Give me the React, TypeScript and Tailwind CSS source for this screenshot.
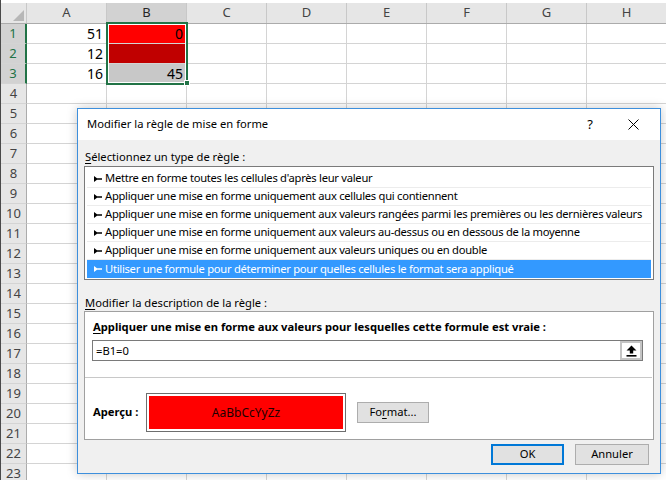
import type { ReactNode } from "react";

const columns = ["A", "B", "C", "D", "E", "F", "G", "H"];

type Cell = { value?: string; bg?: string };

const data: Record<number, Cell[]> = {
  1: [{ value: "51" }, { value: "0", bg: "bg-[#ff0000]" }],
  2: [{ value: "12" }, { bg: "bg-[#c00000]" }],
  3: [{ value: "16" }, { value: "45", bg: "bg-[#c8c8c8]" }],
};

const ruleTypes = [
  "Mettre en forme toutes les cellules d'après leur valeur",
  "Appliquer une mise en forme uniquement aux cellules qui contiennent",
  "Appliquer une mise en forme uniquement aux valeurs rangées parmi les premières ou les dernières valeurs",
  "Appliquer une mise en forme uniquement aux valeurs au-dessus ou en dessous de la moyenne",
  "Appliquer une mise en forme uniquement aux valeurs uniques ou en double",
  "Utiliser une formule pour déterminer pour quelles cellules le format sera appliqué",
];

const RuleArrow = ({ color }: { color: string }) => (
  <svg width="8" height="6" viewBox="0 0 8 6" className="shrink-0">
    <polygon points="0,0 3,2.2 8,2.2 8,3.8 3,3.8 0,6" fill={color} />
  </svg>
);

const U = ({ children }: { children: ReactNode }) => (
  <span className="underline underline-offset-2">{children}</span>
);

const Sheet = () => (
  <div className="pt-[3px]">
    <div className="flex h-[21px] bg-[#e6e6e6] border-b border-[#ababab]">
      <div className="flex w-[26px] shrink-0 items-end justify-end border-r border-[#c8c8c8] pb-[2px] pr-[2px]">
        <svg width="11" height="11" viewBox="0 0 11 11">
          <polygon points="11,0 11,11 0,11" fill="#b7b7b7" />
        </svg>
      </div>
      {columns.map((c) => (
        <div
          key={c}
          className={`flex w-[80px] shrink-0 items-center justify-center border-r border-[#c8c8c8] text-[13px] ${
            c === "B" ? "bg-[#d2d2d2] text-[#262626]" : "text-[#444]"
          }`}
        >
          {c}
        </div>
      ))}
    </div>
    {Array.from({ length: 23 }, (_, i) => i + 1).map((r) => {
      const selected = r <= 3;
      const cells = data[r] ?? [];
      return (
        <div key={r} className="flex h-[20px]">
          <div
            className={`flex w-[26px] shrink-0 items-center justify-center border-b border-[#d4d4d4] text-[13px] ${
              selected
                ? "bg-[#d2d2d2] text-[#217346] border-r-2 border-r-[#217346]"
                : "bg-[#e6e6e6] text-[#444] border-r border-r-[#ababab]"
            }`}
          >
            {r}
          </div>
          {columns.map((c, ci) => {
            const cell = cells[ci];
            return (
              <div
                key={c}
                className={`w-[80px] shrink-0 border-b border-r border-[#d4d4d4] pr-[3px] text-right text-[14px] leading-[19px] text-black ${
                  cell?.bg ?? ""
                }`}
              >
                {cell?.value ?? ""}
              </div>
            );
          })}
        </div>
      );
    })}
  </div>
);

const Dialog = () => (
  <div className="absolute left-[76px] top-[108px] flex h-[366px] w-[584px] flex-col border border-[#3d8fdc] bg-[#f0f0f0] shadow-[0_0_10px_rgba(0,0,0,0.22)]">
    <div className="flex h-[31px] shrink-0 items-center bg-white pl-[9px] text-black">
      <span className="flex-1">Modifier la règle de mise en forme</span>
      <span className="w-[20px] text-center text-[13px]">?</span>
      <span className="flex w-[60px] items-center justify-center pl-[6px]">
        <svg width="11" height="11" viewBox="0 0 11 11">
          <path d="M0.5 0.5 L10.5 10.5 M10.5 0.5 L0.5 10.5" stroke="#000" strokeWidth="1" />
        </svg>
      </span>
    </div>
    <div className="flex flex-1 flex-col px-[6px]">
      <div className="mt-[8px] h-[17px] pl-[1px] leading-[17px]">
        <U>S</U>électionnez un type de règle :
      </div>
      <div className="mt-[1px] h-[114px] border border-[#7a7a7a] bg-white px-[2px] pb-[1px] pt-[3px]">
        {ruleTypes.map((t, i) => {
          const active = i === ruleTypes.length - 1;
          return (
            <div
              key={t}
              className={`flex h-[18px] items-center gap-[3px] overflow-hidden whitespace-nowrap pl-[7px] tracking-[-0.27px] ${
                active ? "bg-[#3399ff] text-white" : "border-b border-[#ececec] text-black"
              }`}
            >
              <RuleArrow color={active ? "#fff" : "#000"} />
              <span>{t}</span>
            </div>
          );
        })}
      </div>
      <div className="mt-[14px] h-[17px] pl-[1px] leading-[17px]">
        <U>M</U>odifier la description de la règle :
      </div>
      <div className="flex h-[129px] flex-col border border-[#a0a0a0] bg-white">
        <div className="mt-[6px] h-[18px] pl-[8px] font-bold leading-[18px]">
          <U>A</U>ppliquer une mise en forme aux valeurs pour lesquelles cette formule est vraie :
        </div>
        <div className="ml-[7px] mt-[4px] flex h-[21px] w-[551px] items-stretch border border-[#7a7a7a] bg-white">
          <span className="flex-1 pl-[3px] leading-[19px]">=B1=0</span>
          <span className="flex w-[22px] items-center justify-center border-2 border-[#c4c4c4] bg-white">
            <svg width="11" height="12" viewBox="0 0 11 12">
              <polygon points="5.5,0.5 10.5,5.5 7.2,5.5 7.2,8.5 3.8,8.5 3.8,5.5 0.5,5.5" fill="#000" />
              <rect x="0.5" y="10" width="10" height="1.6" fill="#000" />
            </svg>
          </span>
        </div>
        <div className="mr-[1px] mt-[16px] h-px bg-[#c8c8c8]" />
        <div className="mt-[15px] flex items-center pl-[8px]">
          <span className="w-[53px] font-bold">Aperçu :</span>
          <div className="h-[39px] w-[200px] border border-[#6e6e6e] p-[2px]">
            <div className="flex h-full items-center justify-center bg-[#ff0000] text-[12px] text-[#1c0000]">
              AaBbCcYyZz
            </div>
          </div>
          <button className="ml-[11px] h-[21px] w-[72px] border border-[#adadad] bg-[#e1e1e1] text-black">
            Fo<U>r</U>mat...
          </button>
        </div>
      </div>
      <div className="mt-[4px] flex justify-end gap-[11px] pr-[5px]">
        <button className="h-[21px] w-[73px] border-2 border-[#0078d7] bg-[#e1e1e1] text-black">OK</button>
        <button className="h-[21px] w-[74px] border border-[#adadad] bg-[#e1e1e1] text-black">Annuler</button>
      </div>
    </div>
  </div>
);

export default function App() {
  return (
    <div
      className="relative h-[480px] w-[666px] overflow-hidden border-l border-[#4a4a4a] bg-white text-[11.2px]"
      style={{ fontFamily: '"Noto Sans", "Liberation Sans", sans-serif' }}
    >
      <Sheet />
      <div className="absolute left-[105px] top-[22px] h-[63px] w-[82px] border-2 border-[#217346]">
        <div className="h-full w-full border border-white" />
      </div>
      <div className="absolute left-[183px] top-[80px] h-[6px] w-[6px] border border-white bg-[#217346]" />
      <Dialog />
    </div>
  );
}
